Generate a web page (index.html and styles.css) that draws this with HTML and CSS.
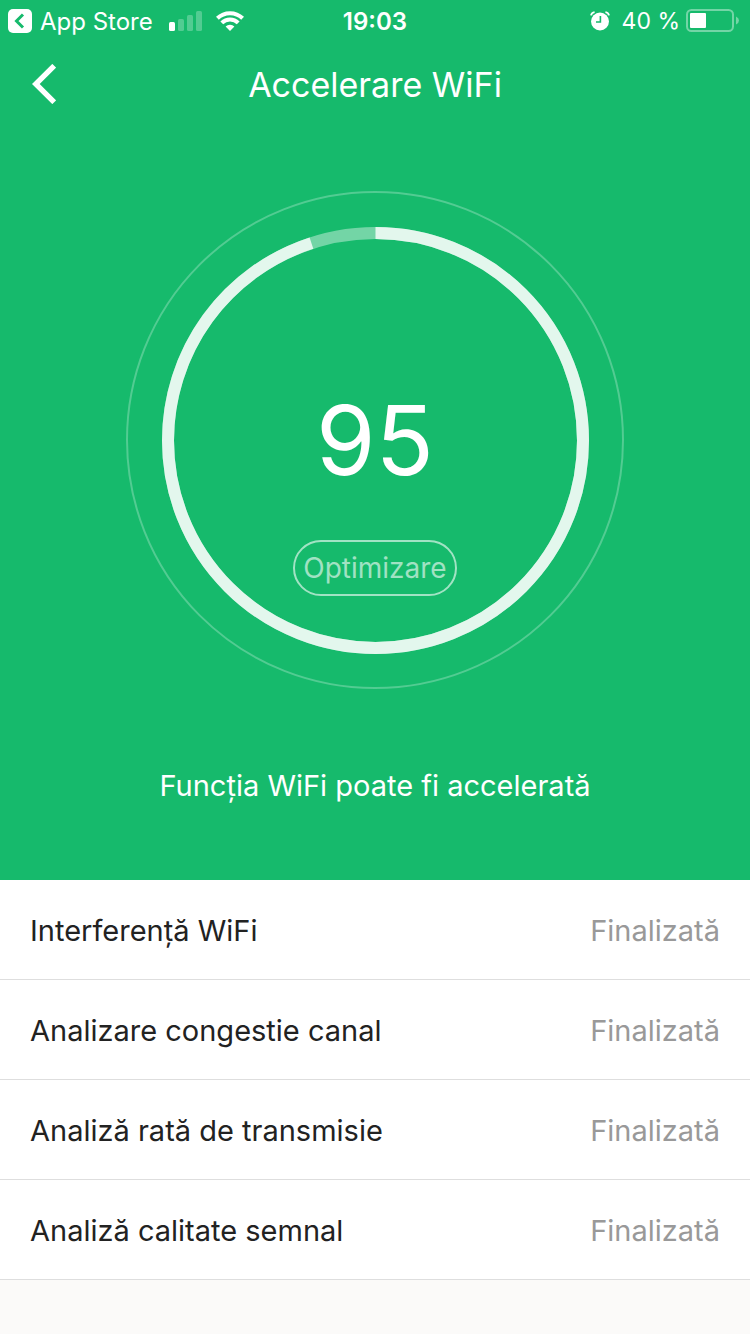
FILE: index.html
```html
<!DOCTYPE html>
<html lang="ro">
<head>
  <meta charset="UTF-8" />
  <meta name="viewport" content="width=device-width, initial-scale=1" />
  <title>Accelerare WiFi</title>
  <link rel="stylesheet" href="styles.css">
</head>
<body>

  <div class="hero">
    <div class="status-bar">
      <div class="status-left">
        <a class="app-link" href="#">
          <svg width="24" height="24" viewBox="0 0 24 24" aria-hidden="true">
            <rect width="24" height="24" rx="5" fill="#fff" />
            <path d="M15 5.5 L8.5 12 L15 18.5" fill="none" stroke="#16ba6c" stroke-width="3" />
          </svg>
          App Store
        </a>
        <svg class="signal" width="33" height="20" viewBox="0 0 33 20" fill="#fff" aria-hidden="true">
          <rect x="0" y="11" width="6" height="9" rx="1.5" />
          <rect x="9" y="8" width="6" height="12" rx="1.5" opacity="0.26" />
          <rect x="18" y="4" width="6" height="16" rx="1.5" opacity="0.26" />
          <rect x="27" y="0" width="6" height="20" rx="1.5" opacity="0.26" />
        </svg>
        <svg class="wifi" width="28" height="20" viewBox="0 0 28 20" aria-hidden="true">
          <g fill="none" stroke="#fff" stroke-width="4">
            <path d="M1.4 7.3 A18 18 0 0 1 26.6 7.3" />
            <path d="M5.8 11.9 A11.6 11.6 0 0 1 22.2 11.9" />
          </g>
          <path d="M14 20 L9.6 15.6 A6.4 6.4 0 0 1 18.4 15.6 Z" fill="#fff" />
        </svg>
      </div>

      <span class="clock">19:03</span>

      <div class="status-right">
        <svg width="20" height="20" viewBox="0 0 20 20" aria-hidden="true">
          <circle cx="10" cy="10.5" r="9" fill="#fff" />
          <path d="M10.4 5 V11 H6" fill="none" stroke="#16ba6c" stroke-width="1.6" />
          <path d="M1 4.4 Q1.6 1.6 4.6 1.2 M19 4.4 Q18.4 1.6 15.4 1.2" fill="none" stroke="#fff" stroke-width="1.8" />
        </svg>
        <span class="percent">40 %</span>
        <svg width="56" height="24" viewBox="0 0 56 24" aria-hidden="true">
          <rect x="1" y="1" width="46" height="21" rx="4.5" fill="none" stroke="#fff" stroke-width="2" opacity="0.4" />
          <rect x="4" y="4" width="16" height="15" rx="1" fill="#fff" />
          <path d="M50 7.5 Q53 9 53 11.5 Q53 14 50 15.5 Z" fill="#fff" opacity="0.4" />
        </svg>
      </div>
    </div>

    <header class="nav">
      <button class="back" aria-label="Înapoi">
        <svg width="24" height="40" viewBox="0 0 24 40" aria-hidden="true">
          <path d="M22.2 1.8 L3.8 20 L22.2 38.2" fill="none" stroke="#fff" stroke-width="5.4" />
        </svg>
      </button>
      <h1>Accelerare WiFi</h1>
    </header>

    <div class="gauge">
      <svg class="rings" viewBox="0 0 500 500" fill="none" stroke="#fff" aria-hidden="true">
        <circle cx="250" cy="250" r="248" stroke-width="2" opacity="0.26" />
        <circle cx="250.5" cy="250.5" r="207.5" stroke-width="12" opacity="0.4" />
        <circle cx="250.5" cy="250.5" r="207.5" stroke-width="12" stroke="#e3f7ed" pathLength="100" stroke-dasharray="95 5" transform="rotate(-90 250.5 250.5)" />
      </svg>
      <div class="gauge-content">
        <span class="score">95</span>
        <button class="optimize">Optimizare</button>
      </div>
    </div>

    <p class="message">Funcţia WiFi poate fi accelerată</p>
  </div>

  <ul class="checks">
    <li><span>Interferenţă WiFi</span><span class="state">Finalizată</span></li>
    <li><span>Analizare congestie canal</span><span class="state">Finalizată</span></li>
    <li><span>Analiză rată de transmisie</span><span class="state">Finalizată</span></li>
    <li><span>Analiză calitate semnal</span><span class="state">Finalizată</span></li>
  </ul>

</body>
</html>
```
FILE: styles.css
```css
:root {
  --green: #16ba6c;
  --page-bg: #fbfaf9;
  --text-color: #222;
  --muted: #999;
  --line: #dedede;
}

* {
  box-sizing: border-box;
}

body {
  font-family: 'Inter', sans-serif;
  background: var(--page-bg);
  color: var(--text-color);
  margin: 0;
}

svg {
  display: block;
  flex: none;
}

.hero {
  background: var(--green);
  color: #fff;
  padding-bottom: 74px;
}

.status-bar {
  display: grid;
  grid-template-columns: 1fr auto 1fr;
  align-items: center;
  height: 40px;
  padding: 2px 8px 0;
  font-size: 23px;
}

.status-left,
.status-right,
.app-link {
  display: flex;
  align-items: center;
}

.app-link {
  gap: 8px;
  color: #fff;
  font-size: 24px;
  text-decoration: none;
}

.signal {
  margin-left: 16px;
}

.wifi {
  margin-left: 14px;
}

.clock {
  font-size: 24px;
  font-weight: 600;
}

.status-right {
  justify-content: flex-end;
}

.percent {
  margin: 0 6px 0 12px;
}

.nav {
  display: grid;
  grid-template-columns: 88px 1fr 88px;
  align-items: center;
  height: 88px;
}

.back {
  display: flex;
  align-items: center;
  height: 88px;
  padding: 0 32px;
  border: none;
  background: none;
  cursor: pointer;
}

h1 {
  margin: 0;
  font-size: 34px;
  font-weight: 400;
  text-align: center;
}

.gauge {
  display: grid;
  justify-content: center;
  padding-top: 62px;
}

.rings,
.gauge-content {
  grid-area: 1 / 1;
}

.rings {
  width: 500px;
  max-width: 100%;
}

.gauge-content {
  display: flex;
  flex-direction: column;
  align-items: center;
  gap: 52px;
  padding-top: 202px;
}

.score {
  font-size: 96px;
  line-height: 96px;
}

.optimize {
  height: 56px;
  padding: 0 8px;
  border: 2px solid rgba(255, 255, 255, 0.6);
  border-radius: 28px;
  background: none;
  color: rgba(255, 255, 255, 0.6);
  font-family: inherit;
  font-size: 28px;
  cursor: pointer;
}

.message {
  margin: 76px 0 0;
  font-size: 29px;
  line-height: 40px;
  text-align: center;
}

.checks {
  list-style: none;
  margin: 0;
  padding: 0;
}

.checks li {
  display: flex;
  align-items: center;
  justify-content: space-between;
  height: 100px;
  padding: 2px 30px 0;
  border-bottom: 1px solid var(--line);
  background: #fff;
  font-size: 29px;
}

.state {
  color: var(--muted);
}
```
